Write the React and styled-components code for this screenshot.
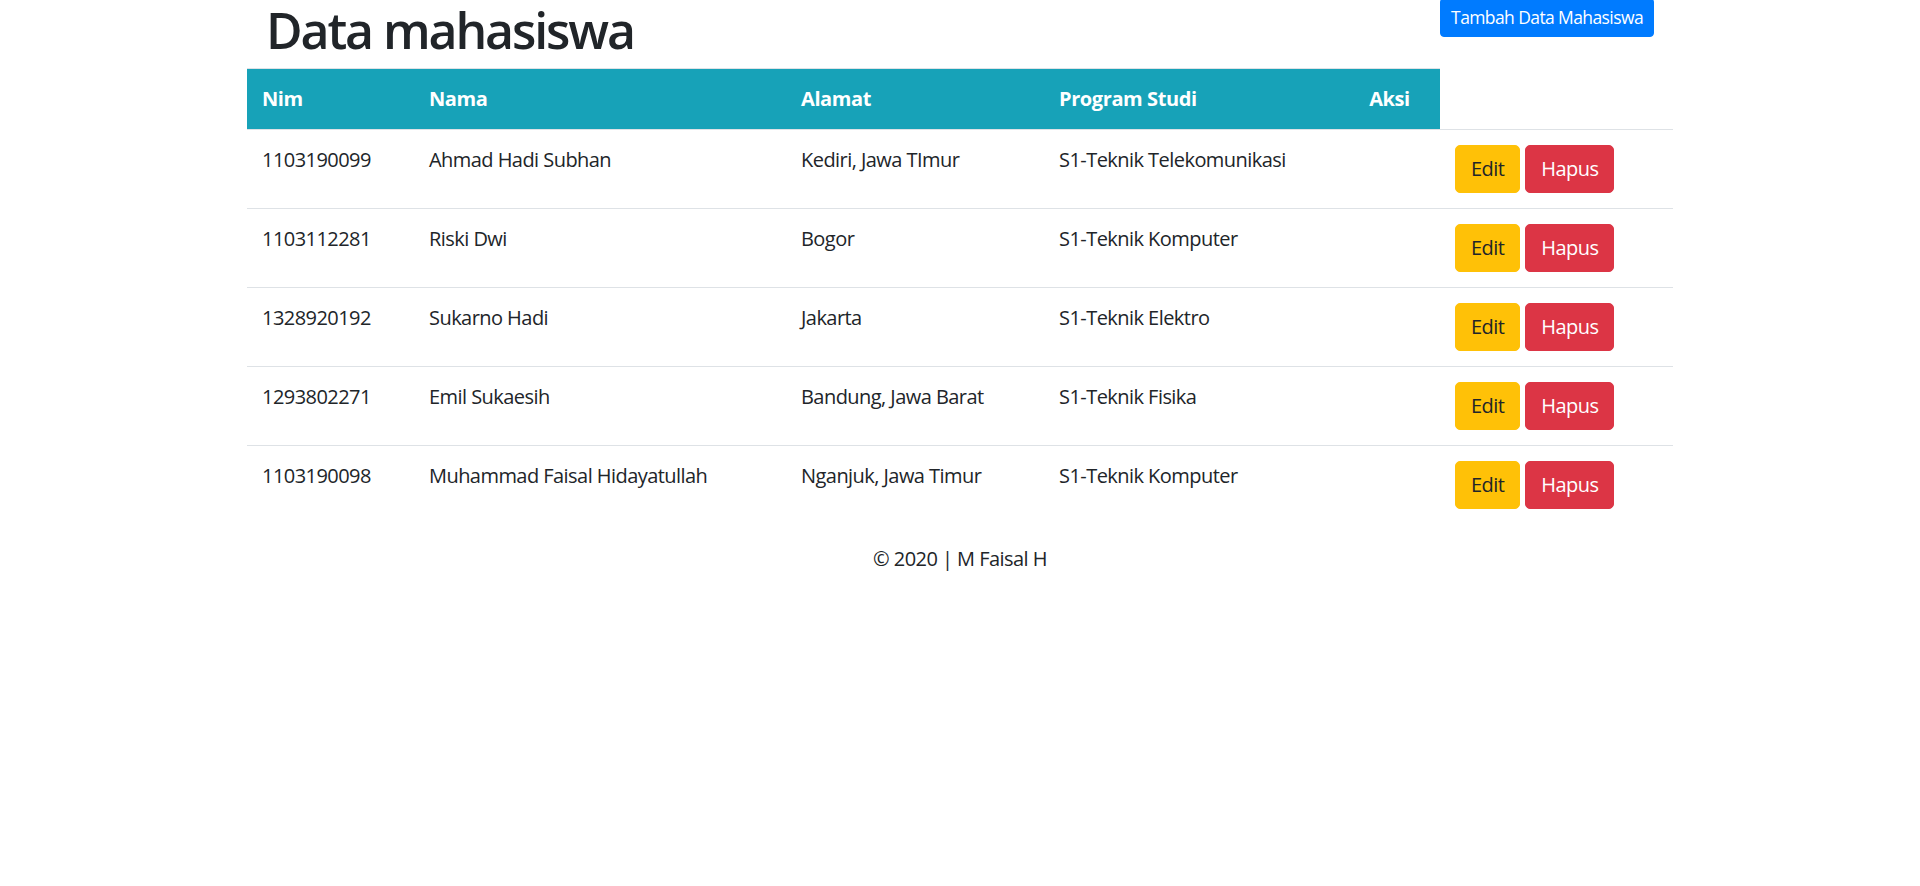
import styled, { createGlobalStyle } from "styled-components";

const GlobalStyle = createGlobalStyle`
  body {
    margin: 0;
    background: #fff;
    color: #212529;
    font-family: "Open Sans", "Noto Sans", Arial, sans-serif;
    font-size: 20px;
    line-height: 1.5;
    letter-spacing: -0.55px;
  }
  * { box-sizing: border-box; }
`;

const mahasiswa = [
  { nim: "1103190099", nama: "Ahmad Hadi Subhan", alamat: "Kediri, Jawa TImur", prodi: "S1-Teknik Telekomunikasi" },
  { nim: "1103112281", nama: "Riski Dwi", alamat: "Bogor", prodi: "S1-Teknik Komputer" },
  { nim: "1328920192", nama: "Sukarno Hadi", alamat: "Jakarta", prodi: "S1-Teknik Elektro" },
  { nim: "1293802271", nama: "Emil Sukaesih", alamat: "Bandung, Jawa Barat", prodi: "S1-Teknik Fisika" },
  { nim: "1103190098", nama: "Muhammad Faisal Hidayatullah", alamat: "Nganjuk, Jawa Timur", prodi: "S1-Teknik Komputer" },
];

const colWidths = [167, 372, 258, 295, 101, 233];

export default function App() {
  return (
    <>
      <GlobalStyle />
      <Container>
        <TopBar>
          <Title>Data mahasiswa</Title>
          <AddButton>Tambah Data Mahasiswa</AddButton>
        </TopBar>
        <Table>
          <colgroup>
            {colWidths.map((w, i) => (
              <Col key={i} $w={w} />
            ))}
          </colgroup>
          <thead>
            <tr>
              <Th>Nim</Th>
              <Th>Nama</Th>
              <Th>Alamat</Th>
              <Th>Program Studi</Th>
              <Th $align="center">Aksi</Th>
            </tr>
          </thead>
          <tbody>
            {mahasiswa.map((m) => (
              <tr key={m.nim}>
                <Td>{m.nim}</Td>
                <Td>{m.nama}</Td>
                <Td>{m.alamat}</Td>
                <Td>{m.prodi}</Td>
                <Td></Td>
                <Td>
                  <Actions>
                    <Btn $variant="warning">Edit</Btn>
                    <Btn $variant="danger">Hapus</Btn>
                  </Actions>
                </Td>
              </tr>
            ))}
          </tbody>
        </Table>
        <Footer>© 2020 | M Faisal H</Footer>
      </Container>
    </>
  );
}

const Container = styled.div`
  width: 1426px;
  margin: 0 auto;
`;

const TopBar = styled.div`
  display: flex;
  justify-content: space-between;
  align-items: flex-start;
  padding: 0 19px;
  margin-bottom: 8px;
`;

const Title = styled.h1`
  margin: 0;
  font-size: 50px;
  font-weight: 600;
  line-height: 60px;
  letter-spacing: -2.1px;
  color: #212529;
`;

const AddButton = styled.button`
  margin-top: -2px;
  height: 38.5px;
  padding: 0 10px;
  background: #007bff;
  border: 1px solid #007bff;
  border-radius: 4px;
  color: #fff;
  font-family: inherit;
  font-size: 17.5px;
  letter-spacing: -0.6px;
  line-height: 1.5;
  cursor: pointer;
`;

const Table = styled.table`
  width: 100%;
  table-layout: fixed;
  border-collapse: collapse;
  margin-bottom: 20px;
`;

const Col = styled.col`
  width: ${(p) => p.$w}px;
`;

const Th = styled.th`
  background: #17a2b8;
  color: #fff;
  font-weight: 700;
  letter-spacing: -0.4px;
  text-align: ${(p) => p.$align || "left"};
  padding: 15px;
  border-top: 1px solid #dee2e6;
  line-height: 30px;
`;

const Td = styled.td`
  padding: 15px;
  vertical-align: top;
  border-top: 1px solid #dee2e6;
  white-space: nowrap;
`;

const Actions = styled.div`
  display: flex;
  gap: 5px;
`;

const variants = {
  warning: { bg: "#ffc107", color: "#212529" },
  danger: { bg: "#dc3545", color: "#fff" },
};

const Btn = styled.button`
  height: 48px;
  padding: 0 15px;
  border: 1px solid ${(p) => variants[p.$variant].bg};
  background: ${(p) => variants[p.$variant].bg};
  color: ${(p) => variants[p.$variant].color};
  border-radius: 5px;
  font-family: inherit;
  font-size: 20px;
  letter-spacing: -0.55px;
  line-height: 1.5;
  cursor: pointer;
`;

const Footer = styled.p`
  margin: 0;
  text-align: center;
  font-size: 20px;
  line-height: 30px;
`;
